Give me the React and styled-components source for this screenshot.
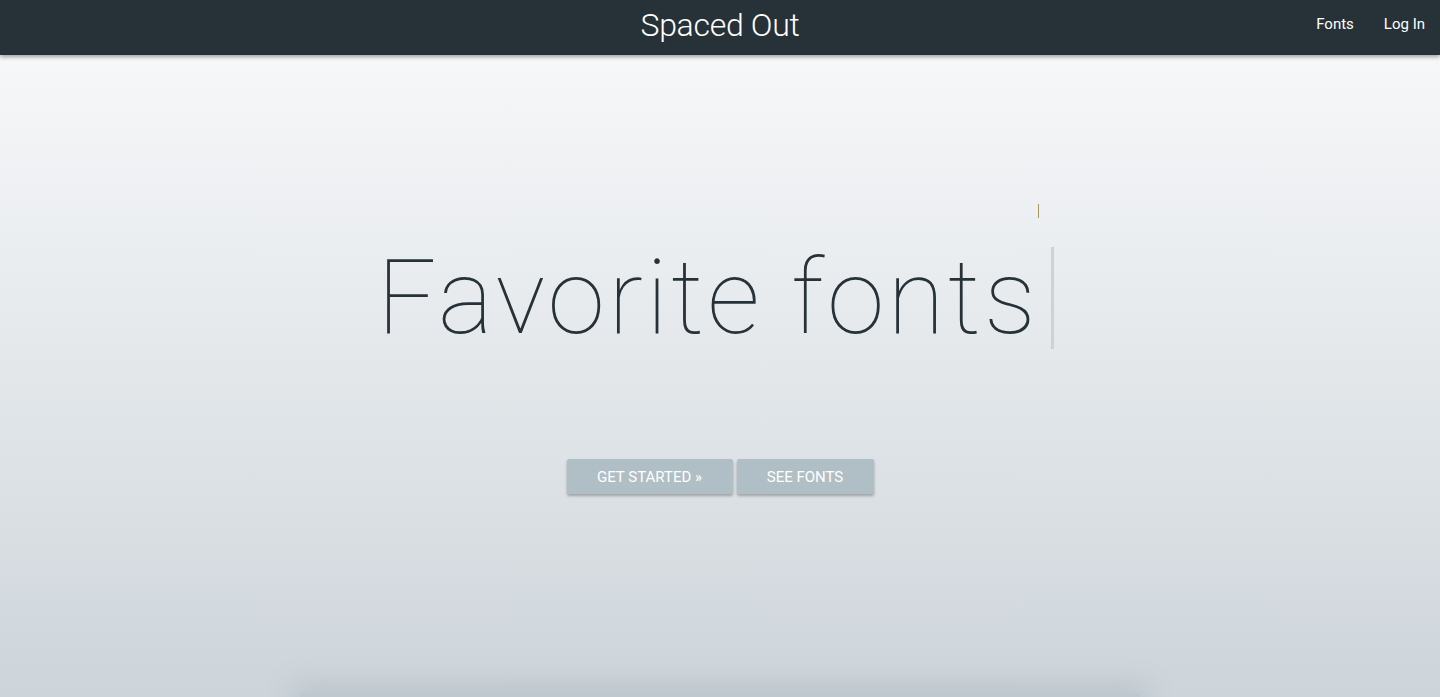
import React from 'react';
import styled, { createGlobalStyle } from 'styled-components';

const GlobalStyle = createGlobalStyle`
  html, body {
    margin: 0;
    padding: 0;
    height: 100%;
    overflow: hidden;
  }
  body {
    font-family: Roboto, "Liberation Sans", sans-serif;
    background: #cfd6dc;
  }
`;

const Page = styled.div`
  min-height: 697px;
  display: flex;
  flex-direction: column;
  background: linear-gradient(180deg, #f9fafb 0%, #e9ecef 40%, #d9dfe3 75%, #cdd4da 100%);
`;

const NavBar = styled.header`
  height: 55px;
  background: #263238;
  box-shadow: 0 2px 4px rgba(0, 0, 0, 0.35);
  display: grid;
  grid-template-columns: 1fr auto 1fr;
  align-items: center;
  padding: 0 15px;
  position: relative;
  z-index: 2;
`;

const Brand = styled.div`
  grid-column: 2;
  color: #ffffff;
  font-size: 32px;
  font-weight: 300;
  letter-spacing: -0.3px;
  padding-bottom: 6px;
`;

const NavLinks = styled.nav`
  grid-column: 3;
  justify-self: end;
  display: flex;
  gap: 30px;
  padding-bottom: 7px;
`;

const NavLink = styled.a`
  color: #ffffff;
  font-size: 15px;
  font-weight: 400;
  text-decoration: none;
`;

const Hero = styled.main`
  flex: 1;
  display: flex;
  flex-direction: column;
  align-items: center;
  padding-top: 192px;
`;

const TitleRow = styled.div`
  display: flex;
  align-items: flex-start;
  padding-right: 9px;
`;

const Title = styled.h1`
  margin: 0;
  color: #263238;
  font-size: 104px;
  font-weight: 100;
  line-height: 102px;
  letter-spacing: 3.3px;
`;

const CaretStack = styled.div`
  display: flex;
  flex-direction: column;
  align-items: flex-end;
  margin-top: -43px;
  margin-left: -1px;
`;

const SmallCaret = styled.span`
  width: 1px;
  height: 14px;
  background: #a5975c;
  margin-right: 15px;
  margin-bottom: 29px;
`;

const BigCaret = styled.span`
  width: 3px;
  height: 102px;
  background: #ccd2d6;
`;

const Actions = styled.div`
  display: flex;
  gap: 4px;
  margin-top: 110px;
`;

const Button = styled.button`
  height: 35px;
  width: ${({ $w }) => $w}px;
  border: none;
  border-radius: 2px;
  background: #b0bec5;
  color: #ffffff;
  font-family: Roboto, "Liberation Sans", sans-serif;
  font-size: 15px;
  font-weight: 400;
  text-transform: uppercase;
  box-shadow: 0 2px 3px rgba(0, 0, 0, 0.28);
  cursor: pointer;
`;

const Footer = styled.div`
  display: flex;
  justify-content: center;
  height: 4px;
`;

const Card = styled.div`
  width: 840px;
  height: 200px;
  background: #c0c8cf;
  box-shadow: 0 -4px 24px 6px rgba(140, 155, 165, 0.25);
`;

export default function App() {
  return (
    <>
      <GlobalStyle />
      <Page>
        <NavBar>
          <Brand>Spaced Out</Brand>
          <NavLinks>
            <NavLink href="#">Fonts</NavLink>
            <NavLink href="#">Log In</NavLink>
          </NavLinks>
        </NavBar>
        <Hero>
          <TitleRow>
            <Title>Favorite fonts</Title>
            <CaretStack>
              <SmallCaret />
              <BigCaret />
            </CaretStack>
          </TitleRow>
          <Actions>
            <Button $w={166}>Get Started »</Button>
            <Button $w={137}>See Fonts</Button>
          </Actions>
        </Hero>
        <Footer>
          <Card />
        </Footer>
      </Page>
    </>
  );
}
